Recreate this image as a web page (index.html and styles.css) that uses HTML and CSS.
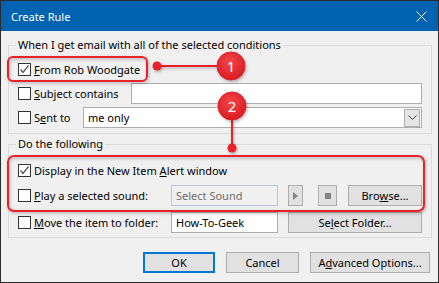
FILE: index.html
```html
<!DOCTYPE html>
<html>
<head>
    <meta charset="utf-8">
    <link rel="stylesheet" href="styles.css">
</head>
<body>
    <div class="window">
        <div class="titlebar">
            <span class="title">Create Rule</span>
            <svg class="close" width="11" height="11" viewBox="0 0 11 11">
                <path d="M0.5 0.5 L10.5 10.5 M10.5 0.5 L0.5 10.5" stroke="#fff" stroke-width="1"/>
            </svg>
        </div>
        <div class="client">
            <fieldset class="group group-conditions">
                <legend>When I get email with all of the selected conditions</legend>
                <div class="row">
                    <span class="check"><svg width="11" height="11" viewBox="0 0 11 11"><path d="M1.5 5.5 L4 8.5 L9.5 1.5" fill="none" stroke="#555" stroke-width="1.3"/></svg></span>
                    <span class="label"><u>F</u>rom Rob Woodgate</span>
                </div>
                <div class="row">
                    <span class="check"></span>
                    <span class="label"><u>S</u>ubject contains</span>
                    <span class="field field-subject"></span>
                </div>
                <div class="row">
                    <span class="check"></span>
                    <span class="label">S<u>e</u>nt to</span>
                    <span class="field combo">
                        <span class="combo-text">me only</span>
                        <span class="combo-btn"><svg width="9" height="5" viewBox="0 0 9 5"><path d="M0.5 0.5 L4.5 4.5 L8.5 0.5" fill="none" stroke="#444" stroke-width="1"/></svg></span>
                    </span>
                </div>
            </fieldset>
            <fieldset class="group group-actions">
                <legend>Do the following</legend>
                <div class="row">
                    <span class="check"><svg width="11" height="11" viewBox="0 0 11 11"><path d="M1.5 5.5 L4 8.5 L9.5 1.5" fill="none" stroke="#555" stroke-width="1.3"/></svg></span>
                    <span class="label">Display in the New Item <u>A</u>lert window</span>
                </div>
                <div class="row row-play">
                    <span class="check"></span>
                    <span class="label"><u>P</u>lay a selected sound:</span>
                    <span class="field field-sound">Select Sound</span>
                    <span class="btn btn-play"><svg width="5" height="8" viewBox="0 0 5 8"><path d="M0 0 L5 4 L0 8 Z" fill="#858585"/></svg></span>
                    <span class="btn btn-stop"><span class="stop-square"></span></span>
                    <span class="btn btn-browse">Bro<u>w</u>se...</span>
                </div>
                <div class="row row-move">
                    <span class="check"></span>
                    <span class="label"><u>M</u>ove the item to folder:</span>
                    <span class="field field-folder">How-To-Geek</span>
                    <span class="btn btn-folder">Se<u>l</u>ect Folder...</span>
                </div>
            </fieldset>
            <div class="buttons">
                <span class="btn btn-ok">OK</span>
                <span class="btn btn-cancel">Cancel</span>
                <span class="btn btn-advanced">A<u>d</u>vanced Options...</span>
            </div>
        </div>

        <svg class="annotations" width="439" height="283" viewBox="0 0 439 283">
            <defs>
                <filter id="shade" x="-20%" y="-20%" width="140%" height="140%">
                    <feDropShadow dx="1" dy="1.5" stdDeviation="1.5" flood-color="#000" flood-opacity="0.3"/>
                </filter>
                <radialGradient id="ball" cx="45%" cy="35%" r="65%">
                    <stop offset="0" stop-color="#f2474b"/>
                    <stop offset="1" stop-color="#d91c22"/>
                </radialGradient>
            </defs>
            <g filter="url(#shade)" fill="none" stroke="#e8212a" stroke-width="2">
                <rect x="8" y="57" width="139" height="24" rx="5"/>
                <rect x="8" y="156" width="416" height="55" rx="6"/>
                <line x1="157" y1="66" x2="220" y2="66"/>
                <line x1="232" y1="118" x2="232" y2="148"/>
            </g>
            <g filter="url(#shade)" fill="#e8212a">
                <circle cx="157" cy="66" r="4.5"/>
                <circle cx="232" cy="148" r="4.5"/>
                <circle cx="231" cy="66" r="14" fill="url(#ball)" stroke="#e21f26" stroke-width="1"/>
                <circle cx="232" cy="106" r="14" fill="url(#ball)" stroke="#e21f26" stroke-width="1"/>
            </g>
            <text class="badge" x="231" y="71.5">1</text>
            <text class="badge" x="232" y="111.5">2</text>
        </svg>
    </div>
</body>
</html>
```

FILE: styles.css
```css
body {
    margin: 0;
    font-family: "Noto Sans", "Open Sans", sans-serif;
    font-size: 11px;
    color: #000;
}

.window {
    position: relative;
    width: 439px;
    height: 283px;
    box-sizing: border-box;
    border: 1px solid #2b2b2b;
    background-color: #f0f0f0;
    overflow: hidden;
}

.titlebar {
    height: 30px;
    background-color: #0063b1;
    color: #fff;
    display: flex;
    align-items: center;
    justify-content: space-between;
    padding: 0 11px 0 10px;
}

.close {
    display: block;
}

.client {
    padding: 6px 6px 0 7px;
}

.group {
    margin: 0;
    padding: 6px 9px 5px 9px;
    border: 1px solid #dcdcdc;
    min-width: 0;
}

.group legend {
    padding: 0 2px;
    margin-left: -2px;
    line-height: 16px;
}

.group-actions {
    margin-top: 2px;
    padding-top: 8px;
    padding-bottom: 4px;
}

.row {
    display: flex;
    align-items: center;
    height: 21px;
}

.group-conditions .row + .row {
    margin-top: 3px;
}

.row-play {
    margin-top: 4px;
}

.row-move {
    margin-top: 6px;
}

.check {
    flex: none;
    width: 13px;
    height: 13px;
    box-sizing: border-box;
    border: 1px solid #333;
    background-color: #fff;
    display: flex;
}

.label {
    margin-left: 3px;
    white-space: nowrap;
}

.field {
    margin-left: auto;
    height: 21px;
    box-sizing: border-box;
    border: 1px solid #adadad;
    background-color: #fff;
    display: flex;
    align-items: center;
    padding-left: 4px;
    white-space: nowrap;
}

.field-subject {
    width: 291px;
}

.combo {
    width: 339px;
    padding-right: 1px;
}

.combo-text {
    flex: 1;
}

.combo-btn {
    width: 16px;
    height: 18px;
    box-sizing: border-box;
    border: 1px solid #adadad;
    background-color: #e5e5e5;
    display: flex;
    align-items: center;
    justify-content: center;
}

.field-sound {
    width: 107px;
    border-color: #b7c6d9;
    background-color: #f0f0f0;
    color: #6d6d6d;
}

.field-folder {
    width: 107px;
}

.btn {
    flex: none;
    height: 21px;
    box-sizing: border-box;
    border: 1px solid #adadad;
    background-color: #e1e1e1;
    display: flex;
    align-items: center;
    justify-content: center;
    white-space: nowrap;
}

.btn-play {
    width: 15px;
    margin-left: 10px;
}

.btn-stop {
    width: 19px;
    margin-left: 15px;
}

.stop-square {
    width: 6px;
    height: 6px;
    background-color: #858585;
}

.btn-browse {
    width: 74px;
    margin-left: 11px;
}

.btn-folder {
    width: 134px;
    margin-left: 10px;
}

.buttons {
    display: flex;
    justify-content: flex-end;
    gap: 11px;
    margin-top: 14px;
    padding-right: 2px;
}

.btn-ok {
    width: 72px;
    border: 2px solid #0078d7;
}

.btn-cancel {
    width: 73px;
}

.btn-advanced {
    width: 120px;
}

.annotations {
    position: absolute;
    left: -1px;
    top: -1px;
    pointer-events: none;
}

.badge {
    fill: #fff;
    font-family: "Noto Sans", sans-serif;
    font-size: 15px;
    text-anchor: middle;
}
```
